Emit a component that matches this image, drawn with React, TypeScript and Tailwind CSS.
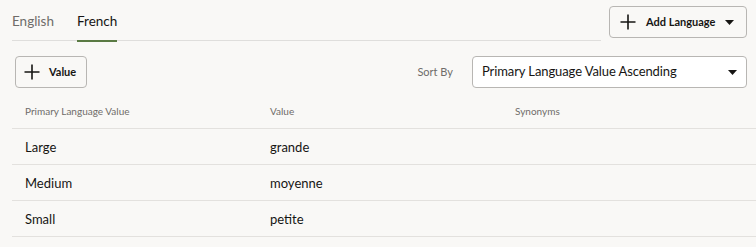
const rows = [
  { primary: "Large", value: "grande" },
  { primary: "Medium", value: "moyenne" },
  { primary: "Small", value: "petite" },
];

function PlusIcon() {
  return (
    <svg className="h-4 w-4" fill="none" viewBox="0 0 16 16">
      <path d="M8 0.5v15M0.5 8h15" stroke="#161513" strokeWidth="1.6" />
    </svg>
  );
}

function Caret() {
  return (
    <svg className="h-[5px] w-[9px]" viewBox="0 0 9 5">
      <path d="M0 0h9L4.5 5z" fill="#161513" />
    </svg>
  );
}

export default function App() {
  return (
    <div className="h-[247px] w-[756px] overflow-hidden bg-[#f9f8f6] font-['Lato',sans-serif] text-[#161513]">
      <div className="flex items-start">
        <div className="ml-3 flex h-[41px] w-[589px] items-stretch gap-[23px] border-b border-[#dfdedc]">
          <div className="flex items-center pt-[2px] text-[13.5px] text-[#6f6c69]">
            English
          </div>
          <div className="relative flex items-center pt-[2px] text-[13.5px] text-[#161513]">
            French
            <div className="absolute right-0 -bottom-[2px] left-0 h-[2px] bg-[#5a7a43]" />
          </div>
        </div>
        <button
          className="mt-[6px] ml-2 flex h-8 w-[138px] items-center rounded-[4px] border border-[#b8b6b3] pl-[10px] pr-3 text-[11px] font-bold"
          type="button"
        >
          <PlusIcon />
          <span className="ml-[10px]">Add Language</span>
          <span className="ml-auto flex">
            <Caret />
          </span>
        </button>
      </div>

      <div className="mt-[15px] flex items-center pl-[15px]">
        <button
          className="flex h-8 w-[72px] items-center rounded-[4px] border border-[#b8b6b3] pl-2 text-[11px] font-bold"
          type="button"
        >
          <PlusIcon />
          <span className="ml-[9px]">Value</span>
        </button>
        <span className="ml-auto text-[11px] text-[#6f6c69]">Sort By</span>
        <div className="mr-[9px] ml-[19px] flex h-8 w-[275px] items-center rounded-[4px] border border-[#b8b6b3] bg-white pr-[9px] pl-[9px] text-[13px] tracking-[-0.1px]">
          Primary Language Value Ascending
          <span className="ml-auto flex">
            <Caret />
          </span>
        </div>
      </div>

      <div className="mt-[6px] ml-3">
        <div className="grid h-[35px] grid-cols-[245px_245px_1fr] items-center border-b border-[#e3e1de] text-[10px] text-[#6f6c69]">
          <div className="pl-[13px]">Primary Language Value</div>
          <div className="pl-[13px]">Value</div>
          <div className="pl-[13px]">Synonyms</div>
        </div>
        {rows.map((row) => (
          <div
            className="grid h-9 grid-cols-[245px_245px_1fr] items-center border-b border-[#e3e1de] pt-[2px] text-[13px]"
            key={row.primary}
          >
            <div className="pl-[13px]">{row.primary}</div>
            <div className="pl-[13px]">{row.value}</div>
            <div className="pl-[13px]" />
          </div>
        ))}
      </div>
    </div>
  );
}
